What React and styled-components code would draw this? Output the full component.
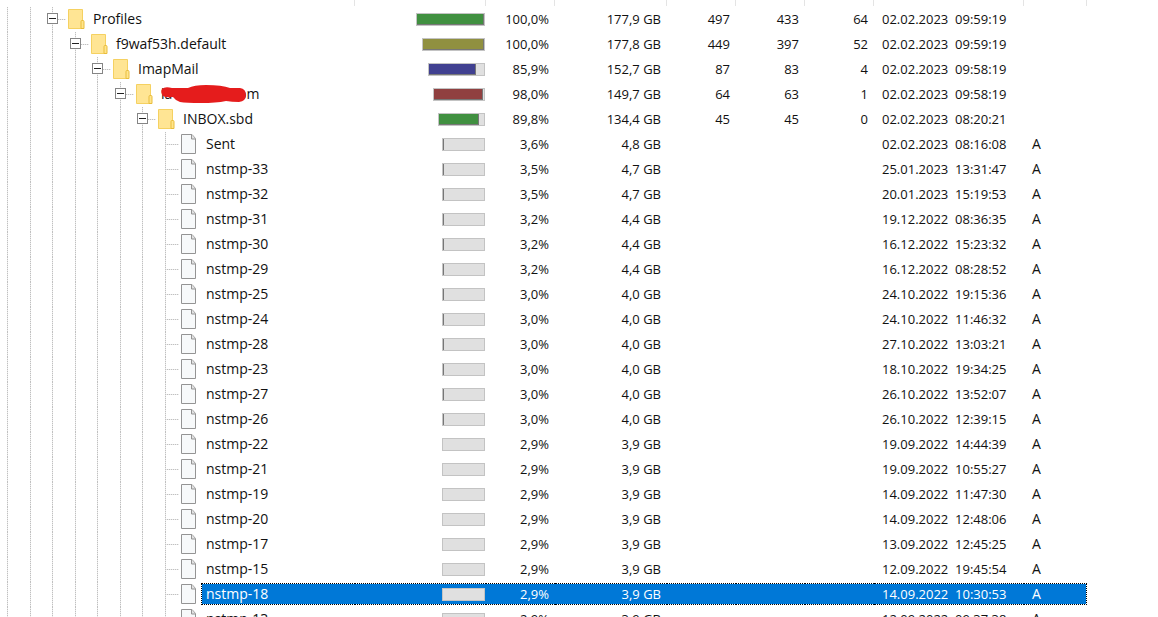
import styled, { createGlobalStyle, css } from 'styled-components'

const GlobalStyle = createGlobalStyle`
  * { box-sizing: border-box; }

  html, body, #root { height: 100%; }

  body {
    margin: 0;
    background: #fff;
    color: #111;
    font-family: "Open Sans", "Noto Sans", sans-serif;
    font-size: 14px;
    overflow: hidden;
  }
`

const Viewport = styled.main`
  height: 100%;
  overflow: hidden;
`

const Table = styled.table`
  width: 100%;
  min-width: 1086px;
  table-layout: fixed;
  border-collapse: collapse;
`

const Col = styled.col`
  width: ${({ $width }) => ($width ? `${$width}px` : 'auto')};
`

const HeadCell = styled.th`
  height: 7px;
  padding: 0;
  background: linear-gradient(#e4e4e4, #e4e4e4) right top / 1px 6px no-repeat;
`

const Cell = styled.td`
  height: 25px;
  padding: 0;
  vertical-align: top;
`

/* focus frame runs through every cell of the selected row */
const frame = css`
  background: #0078d7;
  background-clip: padding-box;
  border-top: 1px dotted #000;
  border-bottom: 1px dotted #000;
  color: #fff;
`

const Value = styled.div`
  display: flex;
  align-items: center;
  justify-content: ${({ $align }) => $align || 'flex-end'};
  height: 22px;
  margin-top: 1px;
  padding: 0 6px 0 8px;
  font-size: 13px;
  line-height: 20px;
  white-space: pre;
  ${({ $selected }) => $selected && frame}
`

const BarValue = styled(Value)`
  padding: 0 1px 0 0;
`

const Attribute = styled(Value)`
  font-size: 14px;
  ${({ $selected }) => $selected && 'border-right: 1px dotted #000;'}
`

const TreeLine = styled.div`
  display: flex;
  height: 25px;
  padding-left: 7px;
`

const Guide = styled.span`
  flex: none;
  width: 22px;
  background: repeating-linear-gradient(#c0c0c0 0 1px, #ebebeb 1px 2px) left top / 1px 100% no-repeat;

  &:nth-child(odd) { width: 23px; }
`

const Branch = styled.span`
  position: relative;
  flex: none;
  width: 16px;
  background:
    repeating-linear-gradient(#c0c0c0 0 1px, #ebebeb 1px 2px) left top / 1px 100% no-repeat,
    repeating-linear-gradient(90deg, #c0c0c0 0 1px, #ebebeb 1px 2px) left 12px / 14px 1px no-repeat;
`

const Expander = styled.button`
  position: absolute;
  top: 6px;
  left: -5px;
  width: 11px;
  height: 11px;
  padding: 0;
  border: 1px solid #858585;
  background: linear-gradient(#222, #222) center / 7px 1px no-repeat #fff;
`

const Icon = styled.svg`
  flex: none;
  width: 20px;
  height: 22px;
  margin-top: 1px;
`

const Label = styled.span`
  position: relative;
  flex: 1;
  height: 22px;
  margin-top: 1px;
  padding-left: 5px;
  line-height: 22px;
  white-space: nowrap;
  ${({ $selected }) => $selected && css`
    ${frame}
    border-left: 1px dotted #000;
    padding-left: 4px;
    line-height: 20px;
  `}
`

const Track = styled.div`
  width: ${({ $width }) => $width}px;
  height: 13px;
  border: 1px solid #c3c3c3;
  background: #e0e0e0;
`

const Fill = styled.div`
  width: 1px;
  height: 100%;
  background: ${({ $color }) => $color};
  border-right: 1px solid #777;
  border-bottom: 1px solid #777;
`

const CoveredText = styled.span`
  display: inline-block;
  width: 77px;
`

const Redaction = styled.svg`
  position: absolute;
  left: 0;
  top: 0;
  width: 92px;
  height: 22px;
`

function FolderIcon() {
  return (
    <Icon viewBox="0 0 20 22" aria-hidden="true">
      <path d="M.5 1.5H14.5V20.5H.5Z" fill="#ffe594" stroke="#f5d161" />
      <path d="M13 20.5V13.5Q13 12.5 14 12.5H15Q16 12.5 16 13.5V20.5Z" fill="#ffe58c" stroke="#e9bd3d" />
    </Icon>
  )
}

function FileIcon() {
  return (
    <Icon viewBox="0 0 20 22" aria-hidden="true">
      <path d="M.5 1.5H11L14.5 5.5V20.5H.5Z" fill="#f7f9fa" stroke="#949494" />
      <path d="M10.5 1.5V6H14.5" fill="#e2e2e2" stroke="#949494" />
    </Icon>
  )
}

function RedactedLabel() {
  return (
    <Label>
      <CoveredText>la</CoveredText>
      om
      <Redaction viewBox="0 0 92 22" aria-hidden="true">
        <path
          d="M6 6Q9 3 16 5L32 5Q38 2 50 2Q66 2 74 5L84 5Q90 6 90 12Q90 18 83 19Q76 19 70 18Q60 20 45 20Q30 20 24 19Q19 17 17 14Q10 15 7 13Q4 9 6 6Z"
          fill="#e51c1c"
        />
      </Redaction>
    </Label>
  )
}

const columns = [355, 131, 69, 112, 69, 69, 69, 150, 63, null]

const folders = [
  { name: 'Profiles', color: '#409040', bar: 69, pct: '100,0', size: '177,9', counts: [497, 433, 64], date: '02.02.2023  09:59:19' },
  { name: 'f9waf53h.default', color: '#909040', bar: 63, pct: '100,0', size: '177,8', counts: [449, 397, 52], date: '02.02.2023  09:59:19' },
  { name: 'ImapMail', color: '#404090', bar: 57, pct: '85,9', size: '152,7', counts: [87, 83, 4], date: '02.02.2023  09:58:19' },
  { name: 'account', redacted: true, color: '#904040', bar: 52, pct: '98,0', size: '149,7', counts: [64, 63, 1], date: '02.02.2023  09:58:19' },
  { name: 'INBOX.sbd', color: '#409040', bar: 47, pct: '89,8', size: '134,4', counts: [45, 45, 0], date: '02.02.2023  08:20:21' },
].map((row, i) => ({ ...row, depth: i + 2, folder: true }))

const files = [
  ['Sent', '3,6', '4,8', '02.02.2023  08:16:08'],
  ['nstmp-33', '3,5', '4,7', '25.01.2023  13:31:47'],
  ['nstmp-32', '3,5', '4,7', '20.01.2023  15:19:53'],
  ['nstmp-31', '3,2', '4,4', '19.12.2022  08:36:35'],
  ['nstmp-30', '3,2', '4,4', '16.12.2022  15:23:32'],
  ['nstmp-29', '3,2', '4,4', '16.12.2022  08:28:52'],
  ['nstmp-25', '3,0', '4,0', '24.10.2022  19:15:36'],
  ['nstmp-24', '3,0', '4,0', '24.10.2022  11:46:32'],
  ['nstmp-28', '3,0', '4,0', '27.10.2022  13:03:21'],
  ['nstmp-23', '3,0', '4,0', '18.10.2022  19:34:25'],
  ['nstmp-27', '3,0', '4,0', '26.10.2022  13:52:07'],
  ['nstmp-26', '3,0', '4,0', '26.10.2022  12:39:15'],
  ['nstmp-22', '2,9', '3,9', '19.09.2022  14:44:39'],
  ['nstmp-21', '2,9', '3,9', '19.09.2022  10:55:27'],
  ['nstmp-19', '2,9', '3,9', '14.09.2022  11:47:30'],
  ['nstmp-20', '2,9', '3,9', '14.09.2022  12:48:06'],
  ['nstmp-17', '2,9', '3,9', '13.09.2022  12:45:25'],
  ['nstmp-15', '2,9', '3,9', '12.09.2022  19:45:54'],
  ['nstmp-18', '2,9', '3,9', '14.09.2022  10:30:53'],
  ['nstmp-13', '2,9', '3,9', '12.09.2022  09:37:38'],
].map(([name, pct, size, date]) => ({
  name, pct, size, date, depth: 7, bar: 43, color: '#777', counts: ['', '', ''], attr: 'A',
}))

const selectedName = 'nstmp-18'

function Row({ row }) {
  const selected = row.name === selectedName
  const percent = parseFloat(row.pct.replace(',', '.'))

  return (
    <tr aria-selected={selected}>
      <Cell>
        <TreeLine>
          {Array.from({ length: row.depth }, (_, i) => <Guide key={i} />)}
          <Branch>
            {row.folder && <Expander type="button" aria-label={`Collapse ${row.name}`} />}
          </Branch>
          {row.folder ? <FolderIcon /> : <FileIcon />}
          {row.redacted ? <RedactedLabel /> : <Label $selected={selected}>{row.name}</Label>}
        </TreeLine>
      </Cell>
      <Cell>
        <BarValue $selected={selected}>
          <Track $width={row.bar}>
            {percent >= 3 && (
              <Fill
                $color={row.color}
                style={row.folder ? { width: `${percent}%` } : undefined}
              />
            )}
          </Track>
        </BarValue>
      </Cell>
      <Cell><Value $selected={selected}>{row.pct}%</Value></Cell>
      <Cell><Value $selected={selected}>{row.size} GB</Value></Cell>
      {row.counts.map((count, i) => (
        <Cell key={i}><Value $selected={selected}>{count}</Value></Cell>
      ))}
      <Cell><Value $selected={selected} $align="flex-start">{row.date}</Value></Cell>
      <Cell><Attribute $selected={selected} $align="flex-start">{row.attr}</Attribute></Cell>
      <Cell />
    </tr>
  )
}

export default function App() {
  return (
    <>
      <GlobalStyle />
      <Viewport>
        <Table>
          <colgroup>
            {columns.map((width, i) => <Col key={i} $width={width} />)}
          </colgroup>
          <thead>
            <tr>
              {columns.slice(0, -1).map((_, i) => <HeadCell key={i} />)}
              <td />
            </tr>
          </thead>
          <tbody>
            {[...folders, ...files].map((row) => <Row key={row.name} row={row} />)}
          </tbody>
        </Table>
      </Viewport>
    </>
  )
}
